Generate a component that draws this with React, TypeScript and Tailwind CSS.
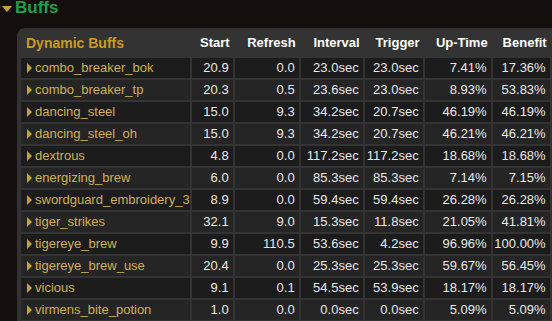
const rows = [
  ['combo_breaker_bok', '20.9', '0.0', '23.0sec', '23.0sec', '7.41%', '17.36%'],
  ['combo_breaker_tp', '20.3', '0.5', '23.6sec', '23.0sec', '8.93%', '53.83%'],
  ['dancing_steel', '15.0', '9.3', '34.2sec', '20.7sec', '46.19%', '46.19%'],
  ['dancing_steel_oh', '15.0', '9.3', '34.2sec', '20.7sec', '46.21%', '46.21%'],
  ['dextrous', '4.8', '0.0', '117.2sec', '117.2sec', '18.68%', '18.68%'],
  ['energizing_brew', '6.0', '0.0', '85.3sec', '85.3sec', '7.14%', '7.15%'],
  ['swordguard_embroidery_3', '8.9', '0.0', '59.4sec', '59.4sec', '26.28%', '26.28%'],
  ['tiger_strikes', '32.1', '9.0', '15.3sec', '11.8sec', '21.05%', '41.81%'],
  ['tigereye_brew', '9.9', '110.5', '53.6sec', '4.2sec', '96.96%', '100.00%'],
  ['tigereye_brew_use', '20.4', '0.0', '25.3sec', '25.3sec', '59.67%', '56.45%'],
  ['vicious', '9.1', '0.1', '54.5sec', '53.9sec', '18.17%', '18.17%'],
  ['virmens_bite_potion', '1.0', '0.0', '0.0sec', '0.0sec', '5.09%', '5.09%'],
];

const cols = ['Start', 'Refresh', 'Interval', 'Trigger', 'Up-Time', 'Benefit'];
const widths = ['w-[41px]', 'w-[64px]', 'w-[62px]', 'w-[58px]', 'w-[66px]', 'w-[57px]'];

export default function App() {
  return (
    <div className="h-screen bg-[#140e0c] overflow-hidden font-['Liberation_Sans',Arial,sans-serif]">
      {/* Section title */}
      <div className="h-[28px] flex items-start gap-[3px] pl-[2px]">
        <span className="mt-[6px] w-0 h-0 border-l-[5px] border-r-[5px] border-t-[6px] border-l-transparent border-r-transparent border-t-[#c9a03a]" />
        <span className="text-[17px] leading-[17px] font-bold text-[#21a048] -mt-[1px]">Buffs</span>
      </div>

      <div className="ml-[17px] bg-[#333333] rounded-tl-[8px] pl-[2px]">
        <table className="table-fixed border-separate border-spacing-[2px] text-[13px]">
          <thead>
            <tr>
              <th className="h-[26px] p-0 w-[167px] text-left pl-[5px] text-[14px] leading-[26px] font-bold text-[#cc9a22]">Dynamic Buffs</th>
              {cols.map((c, i) => (
                <th key={c} className={`${widths[i]} h-[26px] p-0 pr-[3px] text-right leading-[26px] font-bold text-white`}>{c}</th>
              ))}
            </tr>
          </thead>
          <tbody>
            {rows.map((r, idx) => (
              <tr key={r[0]} className={idx % 2 === 0 ? 'bg-[#1c1c1c]' : 'bg-[#252525]'}>
                <td className="h-[20px] p-0 pl-[6px] text-[#cfb052] whitespace-nowrap">
                  <div className="flex h-[20px] items-center gap-[3px] leading-[20px]">
                    <span className="w-0 h-0 border-t-[5px] border-b-[5px] border-l-[5px] border-t-transparent border-b-transparent border-l-[#c9a03a]" />
                    <span>{r[0]}</span>
                  </div>
                </td>
                {r.slice(1).map((v, i) => (
                  <td key={i} className="h-[20px] p-0 pr-[4px] text-right leading-[20px] text-[#e8e8e8] whitespace-nowrap">{v}</td>
                ))}
              </tr>
            ))}
          </tbody>
        </table>
      </div>
    </div>
  );
}
